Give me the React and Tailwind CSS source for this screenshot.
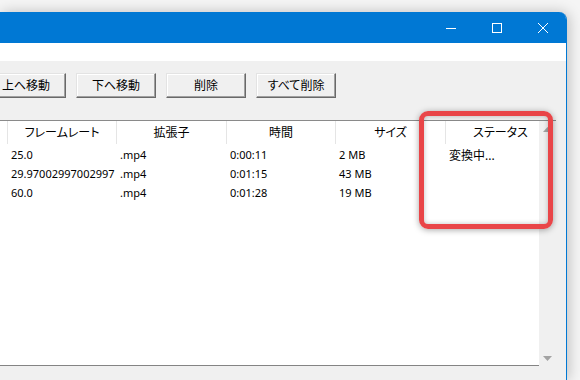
const FONT = "font-['Noto_Sans','Noto_Sans_CJK_JP',sans-serif] [font-feature-settings:'palt']";

const columns = [
  { key: 'fps', label: 'フレームレート', w: 'w-[109px]' },
  { key: 'ext', label: '拡張子', w: 'w-[110px]' },
  { key: 'time', label: '時間', w: 'w-[109px]' },
  { key: 'size', label: 'サイズ', w: 'w-[110px]' },
  { key: 'status', label: 'ステータス', w: 'w-[110px]' },
];

const rows = [
  { fps: '25.0', ext: '.mp4', time: '0:00:11', size: '2 MB', status: '変換中...' },
  { fps: '29.97002997002997', ext: '.mp4', time: '0:01:15', size: '43 MB', status: '' },
  { fps: '60.0', ext: '.mp4', time: '0:01:28', size: '19 MB', status: '' },
];

const ClassicButton = ({ children }) => (
  <button className="w-[80px] h-[25px] shrink-0 flex items-center justify-center bg-[#f0f0f0] border border-t-[#e3e3e3] border-l-[#e3e3e3] border-r-[#696969] border-b-[#696969] shadow-[inset_-1px_-1px_0_#a0a0a0,inset_1px_1px_0_#ffffff] text-[12px] text-black leading-none">
    {children}
  </button>
);

const CaptionButtons = () => (
  <div className="flex h-full">
    <div className="w-[46px] flex items-center justify-center">
      <svg width="10" height="10" viewBox="0 0 10 10"><path d="M0 5.5h10" stroke="#fff" strokeWidth="1" /></svg>
    </div>
    <div className="w-[46px] flex items-center justify-center">
      <svg width="10" height="10" viewBox="0 0 10 10"><rect x="0.5" y="0.5" width="9" height="9" fill="none" stroke="#fff" strokeWidth="1" /></svg>
    </div>
    <div className="w-[46px] flex items-center justify-center">
      <svg width="10" height="10" viewBox="0 0 10 10"><path d="M0 0L10 10M10 0L0 10" stroke="#fff" strokeWidth="1" /></svg>
    </div>
  </div>
);

const ListView = () => (
  <div className="w-[556px] border-t border-[#8a8a8a] flex">
    {/* list body */}
    <div className="w-[539px] h-[245px] bg-white border-b border-[#848484] overflow-hidden">
      <div className="flex h-[25px] items-center">
        <div className="w-[8px] h-[23px] self-start border-r border-[#e5e5e5] shrink-0" />
        {columns.map(c => (
          <div key={c.key} className={`${c.w} shrink-0 h-[23px] self-start border-r border-[#e5e5e5] flex items-center justify-center text-[12px] text-black`}>
            {c.label}
          </div>
        ))}
      </div>
      {rows.map((r, i) => (
        <div key={i} className="flex h-[19px] items-center">
          <div className="w-[8px] shrink-0" />
          {columns.map(c => (
            <div key={c.key} className={`${c.w} shrink-0 pl-[3px] whitespace-nowrap text-black ${c.key === 'status' ? 'text-[12px]' : 'text-[11px]'}`}>
              {r[c.key]}
            </div>
          ))}
        </div>
      ))}
    </div>
    {/* vertical scrollbar */}
    <div className="w-[17px] h-[245px] bg-[#f0f0f0] flex flex-col items-center justify-between pt-[6px] pb-[5px]">
      <svg width="9" height="5" viewBox="0 0 9 5"><path d="M4.5 0L9 5H0z" fill="#a3a3a3" /></svg>
      <svg width="9" height="5" viewBox="0 0 9 5"><path d="M0 0H9L4.5 5z" fill="#a3a3a3" /></svg>
    </div>
  </div>
);

export default function App() {
  return (
    <div className={`${FONT} w-[580px] h-[380px] bg-[#f5f5f5] overflow-hidden relative`}>
      <div className="pt-[12px]">
        <div className="w-[567px] h-[368px] bg-[#f0f0f0] rounded-tr-[8px] border-r border-[#0078d4] shadow-[2px_0_14px_rgba(0,0,0,0.22)] flex flex-col">
          {/* title bar */}
          <div className="h-[31px] bg-[#0078d4] rounded-tr-[7px] flex justify-end">
            <CaptionButtons />
          </div>
          {/* menu bar */}
          <div className="h-[18px] bg-white" />
          {/* toolbar */}
          <div className="flex gap-[10px] ml-[-14px] mt-[12px]">
            <ClassicButton>上へ移動</ClassicButton>
            <ClassicButton>下へ移動</ClassicButton>
            <ClassicButton>削除</ClassicButton>
            <ClassicButton>すべて削除</ClassicButton>
          </div>
          <div className="mt-[22px]">
            <ListView />
          </div>
        </div>
      </div>

      {/* highlight annotation */}
      <div className="absolute left-[419px] top-[111px] w-[134px] h-[118px] rounded-[9px] border-[5px] border-[#e94548] shadow-[0_1px_6px_rgba(0,0,0,0.35),inset_0_0_5px_rgba(0,0,0,0.25)]" />
    </div>
  );
}
